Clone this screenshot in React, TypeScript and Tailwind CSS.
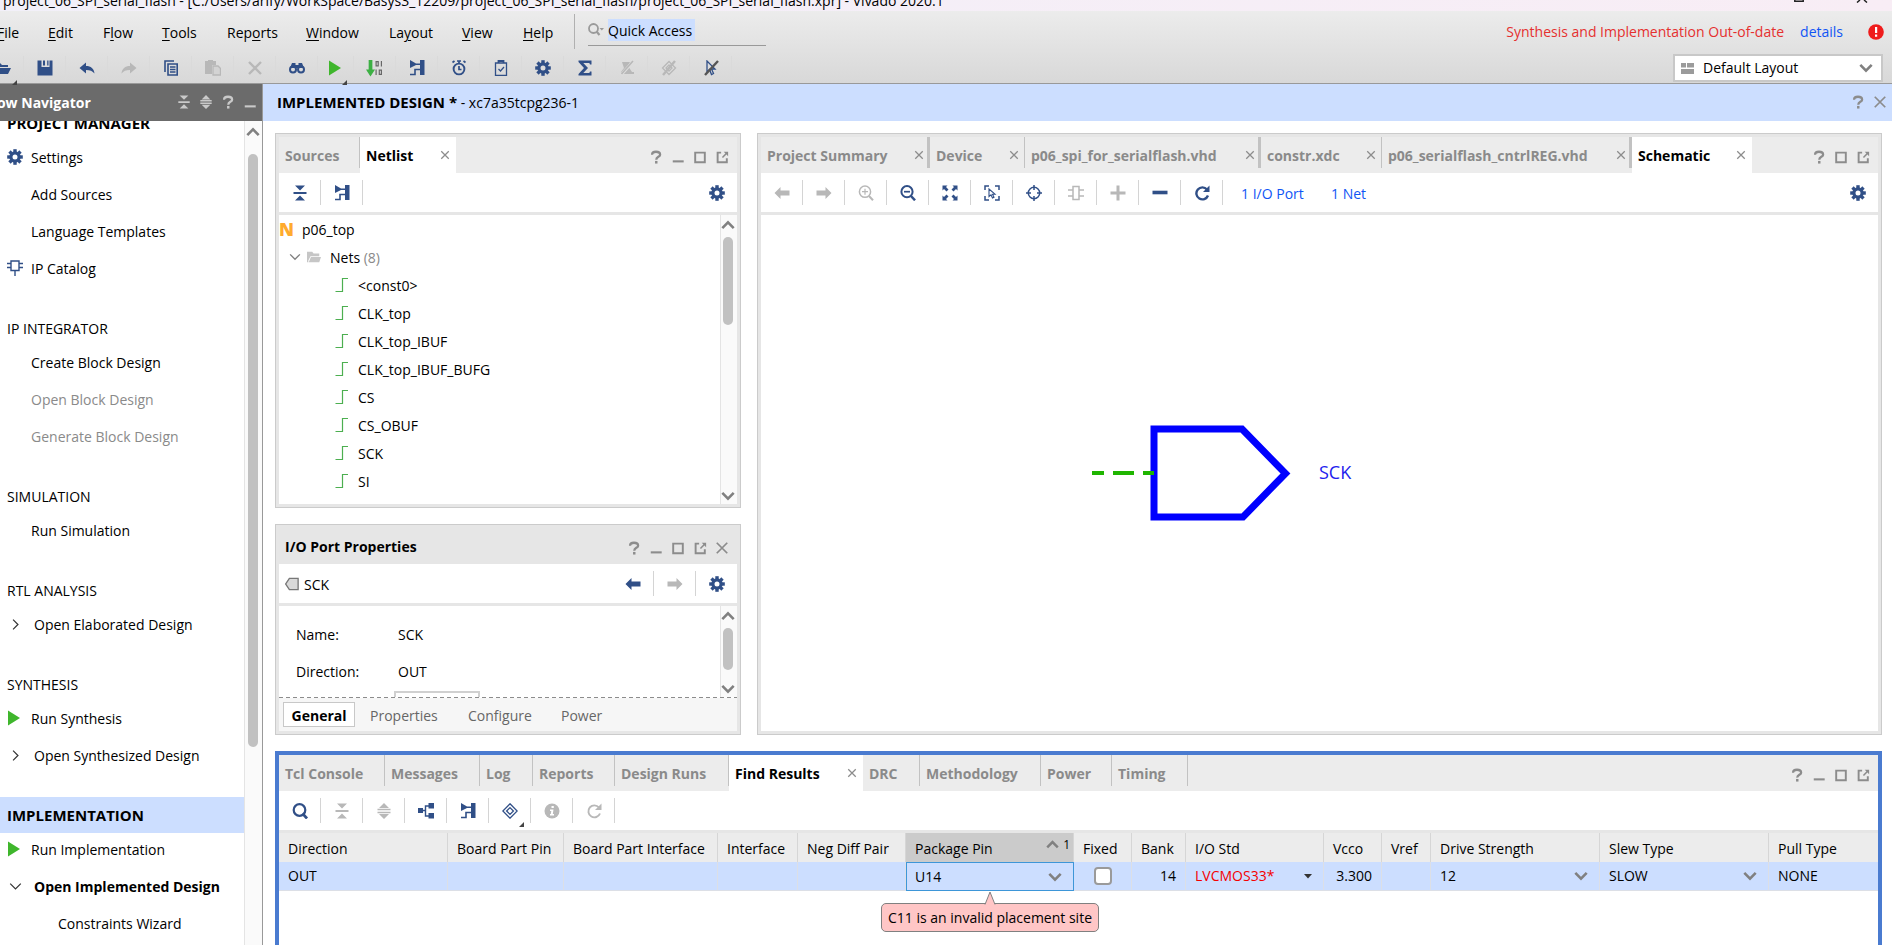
import React from "react";

const NAVY = "#304f87";
const GREY = "#b8b8b8";
const MID = "#8c8c8c";

type IconProps = { c?: string; s?: number };

function Svg({ s = 16, children }: { s?: number; children: React.ReactNode }) {
  return (
    <svg width={s} height={s} viewBox="0 0 16 16" fill="none" aria-hidden="true" className="shrink-0">
      {children}
    </svg>
  );
}

const Gear = ({ c = NAVY, s }: IconProps) => (
  <Svg s={s}>
    <circle cx="8" cy="8" r="4.1" stroke={c} strokeWidth="3.2" />
    {[0, 45, 90, 135].map((a) => (
      <g key={a} transform={`rotate(${a} 8 8)`} fill={c}>
        <rect x="6.3" y="0.2" width="3.4" height="3" />
        <rect x="6.3" y="12.8" width="3.4" height="3" />
      </g>
    ))}
  </Svg>
);
const Open = () => (
  <Svg>
    <path d="M0 3h5l2 2h6v2H4L1 13H0z M5 8h11l-3 6H2z" fill={NAVY} />
  </Svg>
);
const Save = () => (
  <Svg>
    <path d="M0.500 0.500h4V7h8V0.500h3v15H.5z" fill={NAVY} />
    <path d="M6 0.500h2V5.500H6z M10.200 0.500h1.300v5h-1.300z" fill={NAVY} />
  </Svg>
);
const Undo = () => (
  <Svg>
    <path d="M0.500 8 7 2.500V6c5 0 8 2.500 8.500 7.500C13.500 11 11 10 7 10v3.500z" fill={NAVY} />
  </Svg>
);
const Redo = () => (
  <Svg>
    <path d="M15.500 8 9 2.500V6C4 6 1 8.500 .5 13.500 2.500 11 5 10 9 10v3.500z" fill={GREY} />
  </Svg>
);
const Copy = () => (
  <Svg>
    <path d="M2 12V1h9" stroke={NAVY} strokeWidth="1.6" />
    <path d="M5 4h9.200v11H5z" stroke={NAVY} strokeWidth="1.600" />
    <path d="M7 7h5.500M7 9.500h5.500M7 12h5.500" stroke={NAVY} strokeWidth="1.500" />
  </Svg>
);
const Paste = () => (
  <Svg>
    <path d="M0 1h3V0h5v1h3v4H7v9H0z" fill={GREY} />
    <path d="M8 6h5l2.500 2.500V15H8z" fill="#d3d3d3" stroke={GREY} strokeWidth="1.300" />
  </Svg>
);
const Cross = ({ c = MID, s, w = 1.8 }: IconProps & { w?: number }) => (
  <Svg s={s}>
    <path d="M2 2l12 12M14 2 2 14" stroke={c} strokeWidth={w} />
  </Svg>
);
const Binoculars = () => (
  <Svg>
    <path d="M3 3h3.500v2h3V3H13l2 5H1z" fill={NAVY} />
    <circle cx="4" cy="9.500" r="3" stroke={NAVY} strokeWidth="2" />
    <circle cx="12" cy="9.500" r="3" stroke={NAVY} strokeWidth="2" />
  </Svg>
);
const Play = () => (
  <Svg>
    <path d="M1 0.500v15L13 8z" fill="#3fb62c" />
  </Svg>
);
const Bits = () => (
  <Svg s={17}>
    <path d="M2.500 0h3.500v9H8.500L4.200 15.500 0 9h2.500z" fill="#3cb043" />
    <g stroke="#666" strokeWidth="1.100">
      <path d="M9.500 1.500h2v4h-2zM14.500 1v5M9.500 9v5M12.500 9.500h2v4h-2z" />
    </g>
  </Svg>
);
const Netgate = () => (
  <Svg>
    <path d="M1 0v8l6-3h4V15H15.500V0H11v3.500H7z" fill={NAVY} />
    <path d="M1 14.500h5V9.500h5" stroke={NAVY} strokeWidth="1.600" />
  </Svg>
);
const Clock = () => (
  <Svg>
    <circle cx="8" cy="9" r="5.400" stroke={NAVY} strokeWidth="1.900" />
    <path d="M8 6v3.500h2.500M6 1h4M1.500 2.500 3.500 1M14.500 2.500 12.500 1M8 1v3" stroke={NAVY} strokeWidth="1.700" />
  </Svg>
);
const Clipboard = () => (
  <Svg>
    <path d="M2.500 3h11v12.300h-11z" stroke={NAVY} strokeWidth="1.300" />
    <path d="M5.500 3V1h5v2" stroke={NAVY} strokeWidth="1.800" />
    <path d="M5.500 9l2 2 3.500-4" stroke={NAVY} strokeWidth="1.200" />
  </Svg>
);
const Sigma = () => (
  <Svg>
    <path d="M1.500 .5h13v4H13l-.7-1.500H6.300l4.700 5-4.700 5h6L13 11.500h1.500v4h-13V14L7 8 1.500 2z" fill={NAVY} />
  </Svg>
);
const SlashA = () => (
  <Svg>
    <path d="M3 2h8l-2 4 4 6h2v2H2v-2l3-4z" fill={GREY} />
    <path d="M14.500 1 2 15" stroke="#dedede" strokeWidth="3" />
    <path d="M14 1 2.500 14" stroke={GREY} strokeWidth="1.600" />
  </Svg>
);
const SlashB = () => (
  <Svg>
    <path d="M8 1.500 14.500 8 8 14.500 1.500 8z M8 5l3 3-3 3-3-3z" stroke={GREY} strokeWidth="1.300" />
    <path d="M14 1 2 15" stroke={GREY} strokeWidth="2.400" />
  </Svg>
);
const SlashC = () => (
  <Svg>
    <path d="M4 1v11l2.500-2.500 2 5 2-1-2-4.500H12z" stroke={NAVY} strokeWidth="1.300" />
    <path d="M15 1 2 15" stroke="#555" strokeWidth="2.400" />
  </Svg>
);
const Collapse = ({ c = NAVY, s }: IconProps) => (
  <Svg s={s}>
    <path d="M3 0.500h10L8 5.500z M3 15.500h10L8 10.500z M1.500 7h13v2h-13z" fill={c} />
  </Svg>
);
const Expand = ({ c = GREY, s }: IconProps) => (
  <Svg s={s}>
    <path d="M3 5h10L8 0z M3 11h10l-5 5z M1.500 5.800h13v1.500h-13z M1.500 8.700h13v1.500h-13z" fill={c} />
  </Svg>
);
const Arrow = ({ c = NAVY, flip = false }: IconProps & { flip?: boolean }) => (
  <Svg>
    <path d={flip ? "M15.500 8 9.500 2v3.500H.5v5h9V14z" : "M.5 8l6-6v3.500h9v5h-9V14z"} fill={c} />
  </Svg>
);
const ZoomIcon = ({ c = NAVY, plus = false, w = 2 }: IconProps & { plus?: boolean; w?: number }) => (
  <Svg>
    <circle cx="7" cy="6.700" r="5.600" stroke={c} strokeWidth={w} />
    <path d="M11 11l4 4.300" stroke={c} strokeWidth={w + 0.5} />
    <path d={plus ? "M4 6.700h6M7 3.700v6" : "M4 6.700h6"} stroke={c} strokeWidth={w - 0.3} />
  </Svg>
);
const Fit = () => (
  <Svg>
    <path d="M0.500 .5h5L4 2l2.500 2.500-2 2L2 4 .5 5.500z M15.500 .5h-5L12 2 9.500 4.500l2 2L14 4l1.500 1.500z M.5 15.500h5L4 14l2.500-2.500-2-2L2 12 .5 10.500z M15.500 15.500h-5L12 14l-2.500-2.500 2-2L14 12l1.500-1.500z" fill={NAVY} />
  </Svg>
);
const FitSel = () => (
  <Svg>
    <path d="M1 5V1h4M11 1h4v4M15 11v4h-4M5 15H1v-4" stroke={NAVY} strokeWidth="1.500" />
    <path d="M5 4v7.500l2-1.700 1.500 3.200 1.500-.8-1.500-3H11z" stroke={NAVY} strokeWidth="1.100" />
  </Svg>
);
const Target = () => (
  <Svg>
    <circle cx="8" cy="8" r="5.700" stroke={NAVY} strokeWidth="1.500" />
    <path d="M8 0v5M8 11v5M0 8h5M11 8h5" stroke={NAVY} strokeWidth="1.500" />
  </Svg>
);
const Chip = () => (
  <Svg>
    <path d="M5 1.500h6v13H5z M0 5h5M0 11h5M11 5h5M11 11h5" stroke={GREY} strokeWidth="1.500" />
  </Svg>
);
const Plus = () => (
  <Svg>
    <path d="M8 .5v15M.5 8h15" stroke={GREY} strokeWidth="3" />
  </Svg>
);
const Minus = () => (
  <Svg>
    <path d="M0.500 7.500h15" stroke={NAVY} strokeWidth="3.600" />
  </Svg>
);
const Reload = ({ c = NAVY, w = 2.4 }: IconProps & { w?: number }) => (
  <Svg>
    <path d="M13 4.500A6 6 0 1 0 14 10.500" stroke={c} strokeWidth={w} />
    <path d="M15.500 0.500v6.500H9z" fill={c} />
  </Svg>
);
const IpCore = () => (
  <Svg>
    <path d="M4 1h8v9.500H4z M0 3.500h4M0 7.500h4M12 3.500h4M12 7.500h4M8 10.500v5.500" stroke={NAVY} strokeWidth="1.400" />
  </Svg>
);
const Chevron = ({ c = "#808080", d = "down", s = 14, w = 3 }: IconProps & { d?: "down" | "up" | "right"; w?: number }) => (
  <Svg s={s}>
    <path
      d={d === "down" ? "M1.500 4.500 8 11l6.500-6.500" : d === "up" ? "M1.500 11.500 8 5l6.500 6.500" : "M5 2l6 6-6 6"}
      stroke={c}
      strokeWidth={w}
    />
  </Svg>
);
const NetStep = () => (
  <svg width="14" height="14" viewBox="0 0 14 14" fill="none" aria-hidden="true" className="shrink-0">
    <path d="M0.500 13.500h7V0.500H13" stroke="#4caf50" strokeWidth="1.200" />
  </svg>
);
const Folder = () => (
  <Svg s={14}>
    <path d="M0 2h6l1.500 2H14v3H4l-2.500 5V14H0z M4.500 8H16l-2 6H2z" fill="#c6c6c6" />
  </Svg>
);
const PortTag = () => (
  <Svg s={14}>
    <path d="M5 1.500h10v13H5L.8 8z" fill="#d9d9d9" stroke="#777" strokeWidth="1.500" />
  </Svg>
);
const Search = ({ c = NAVY, w = 2.2 }: IconProps & { w?: number }) => (
  <Svg>
    <circle cx="7.500" cy="7" r="5.800" stroke={c} strokeWidth={w} />
    <path d="M10.500 10.500l4.500 5" stroke={c} strokeWidth={w + 0.5} />
  </Svg>
);
const SearchMenu = () => (
  <svg width="16" height="13" viewBox="0 0 16 13" fill="none" aria-hidden="true" className="shrink-0">
    <circle cx="5.500" cy="5.500" r="4.500" stroke="#9a9a9a" strokeWidth="1.800" />
    <path d="M8.500 8.500l3 3.500" stroke="#9a9a9a" strokeWidth="2.200" />
    <path d="M11.500 5H16l-2.200 2.500z" fill="#9a9a9a" />
  </svg>
);
const Hier = () => (
  <Svg>
    <path d="M0 5h5v5H0z M10.500 0H16v5.500h-5.500z M10.500 10H16v5.500h-5.500z" fill={NAVY} />
    <path d="M11 3H7.500v10H11M4 7.500h3.500" stroke={NAVY} strokeWidth="1.400" />
  </Svg>
);
const Diamond = () => (
  <Svg>
    <path d="M8 .8 15.200 8 8 15.200.8 8z M8 4.600 11.400 8 8 11.400 4.600 8z" stroke={NAVY} strokeWidth="1.300" />
  </Svg>
);
const Info = () => (
  <Svg>
    <circle cx="8" cy="8" r="7.500" fill={GREY} />
    <path d="M7.500 3h2.300v2H7.500z M6 6.500h3.500L8.800 11h1.200v1.500H6V11h.8L7.300 8H6z" fill="#fff" />
  </Svg>
);
const Help = ({ c = MID }: IconProps) => (
  <Svg s={14}>
    <path d="M3.500 5.500C3.500 2.800 5.500 2 8 2s4.700 1 4.700 3.300C12.700 8 8.300 7.700 8.300 11" stroke={c} strokeWidth="2.600" />
    <path d="M6.900 12.500h2.800V15.500H6.900z" fill={c} />
  </Svg>
);
const Min = ({ c = MID }: IconProps) => (
  <Svg s={14}>
    <path d="M2 13h12.500" stroke={c} strokeWidth="2.400" />
  </Svg>
);
const Max = () => (
  <Svg s={14}>
    <path d="M2.500 3h11v11h-11z" stroke={MID} strokeWidth="2.200" />
  </Svg>
);
const Pop = () => (
  <Svg s={14}>
    <path d="M7 3H3v11h10.500v-4.500" stroke={MID} strokeWidth="2.200" />
    <path d="M10 2h5v5z" fill={MID} />
    <path d="M13.500 3.500 8.500 8.500" stroke={MID} strokeWidth="1.800" />
  </Svg>
);

function ToolButton({ label, children, faint = false, menu = false, narrow = false }: { label: string; children: React.ReactNode; faint?: boolean; menu?: boolean; narrow?: boolean }) {
  return (
    <button
      type="button"
      aria-label={label}
      className={`relative flex h-[25px] shrink-0 items-center justify-center border-r ${narrow ? "w-9" : "w-[42px]"} ${faint ? "border-[#dadada]" : "border-[#d4d4d4]"}`}
    >
      {children}
      {menu && <span className="absolute -bottom-1 right-1.5 border-b-[5px] border-l-[5px] border-b-[#444] border-l-transparent" />}
    </button>
  );
}

function WinButtons({ kinds }: { kinds: string[] }) {
  return (
    <div className="ml-auto flex items-center gap-2 pr-2 pt-1">
      {kinds.map((k) => (
        <button key={k} type="button" aria-label={k} className="block">
          {k === "Help" && <Help />}
          {k === "Minimize" && <Min />}
          {k === "Maximize" && <Max />}
          {k === "Float" && <Pop />}
          {k === "Close" && <Cross s={14} w={2} />}
        </button>
      ))}
    </div>
  );
}

type TabDef = { label: string; w: string; active?: boolean; close?: boolean; thick?: boolean };

function Tabs({ tabs, kinds }: { tabs: TabDef[]; kinds: string[] }) {
  return (
    <div className="flex h-9 shrink-0 bg-[#ececec]">
      {tabs.map((t) => (
        <div key={t.label} className={`relative flex shrink-0 items-center pl-1.5 ${t.w} ${t.active ? "bg-white" : ""}`}>
          <button type="button" className={`whitespace-nowrap pt-0.5 font-bold ${t.active ? "text-black" : "text-[#8a8a8a]"}`}>
            {t.label}
          </button>
          {t.close && (
            <button type="button" aria-label={`Close ${t.label}`} className="ml-auto mr-1.5 block">
              <Cross s={10} w={2} />
            </button>
          )}
          {!t.active && (
            <span className={`absolute right-0 top-0 h-[31px] bg-[#c2c2c2] ${t.thick ? "w-[3px]" : "w-px"}`} />
          )}
        </div>
      ))}
      <WinButtons kinds={kinds} />
    </div>
  );
}

function Scrollbar({ thumb }: { thumb: string }) {
  return (
    <div className="flex w-[17px] shrink-0 flex-col items-center border-l border-[#e4e4e4] bg-[#fafafa] pb-px pr-0.5 pt-[3px]" aria-hidden="true">
      <Chevron d="up" />
      <div className={`mt-[5px] w-2.5 shrink-0 rounded-full bg-[#c1c1c1] ${thumb}`} />
      <div className="mt-auto">
        <Chevron />
      </div>
    </div>
  );
}

const panel = "flex min-h-0 flex-col border border-[#cbcbcb] bg-[#e6e6e6] p-[3px]";
const bar = "flex h-[39px] shrink-0 items-center bg-white";

type NavItem = { label: string; icon?: "gear" | "ip" | "play" | "right" | "down"; dim?: boolean; bold?: boolean; deep?: boolean };
const nav: { title: string; bold?: boolean; active?: boolean; items: NavItem[] }[] = [
  { title: "PROJECT MANAGER", bold: true, items: [{ label: "Settings", icon: "gear" }, { label: "Add Sources" }, { label: "Language Templates" }, { label: "IP Catalog", icon: "ip" }] },
  { title: "IP INTEGRATOR", items: [{ label: "Create Block Design" }, { label: "Open Block Design", dim: true }, { label: "Generate Block Design", dim: true }] },
  { title: "SIMULATION", items: [{ label: "Run Simulation" }] },
  { title: "RTL ANALYSIS", items: [{ label: "Open Elaborated Design", icon: "right" }] },
  { title: "SYNTHESIS", items: [{ label: "Run Synthesis", icon: "play" }, { label: "Open Synthesized Design", icon: "right" }] },
  { title: "IMPLEMENTATION", bold: true, active: true, items: [{ label: "Run Implementation", icon: "play" }, { label: "Open Implemented Design", icon: "down", bold: true }, { label: "Constraints Wizard", deep: true }] },
];

function Navigator() {
  return (
    <aside className="flex w-[263px] shrink-0 flex-col border-r border-[#999] bg-white">
      <header className="flex h-[37px] shrink-0 items-center bg-[#6b6b6b] pb-0.5 pr-[5px]">
        <h2 className="-ml-[15px] whitespace-nowrap pt-0.5 font-bold text-white">Flow Navigator</h2>
        <div className="ml-auto flex items-center gap-2">
          <button type="button" aria-label="Collapse all"><Collapse c="#c9c9c9" s={14} /></button>
          <button type="button" aria-label="Expand all"><Expand c="#c9c9c9" s={14} /></button>
          <button type="button" aria-label="Help"><Help c="#c9c9c9" /></button>
          <button type="button" aria-label="Minimize"><Min c="#c9c9c9" /></button>
        </div>
      </header>
      <div className="flex min-h-0 flex-1 overflow-hidden">
        <nav className="-mt-4 min-w-0 flex-1">
          {nav.map((s) => (
            <section key={s.title}>
              <h3 className={`flex h-9 items-center pl-[7px] ${s.bold ? "text-[15px] font-bold" : "pt-0.5"} ${s.active ? "bg-[#ccdeff]" : ""}`}>{s.title}</h3>
              <ul className="flex flex-col gap-[3px] pb-6">
                {s.items.map((i) => {
                  const branch = i.icon === "right" || i.icon === "down";
                  return (
                    <li key={i.label} className="flex h-[34px] items-center pb-0.5 pl-[7px]">
                      <span className={`flex shrink-0 items-center ${i.deep ? "w-[51px]" : branch ? "w-[27px] pl-0.5" : "w-6"}`}>
                        {i.icon === "gear" && <Gear />}
                        {i.icon === "ip" && <IpCore />}
                        {i.icon === "play" && <Play />}
                        {branch && <Chevron d={i.icon === "right" ? "right" : "down"} c="#333" s={13} w={1.5} />}
                      </span>
                      <a href="#" className={`whitespace-nowrap pt-0.5 ${i.dim ? "text-[#8a8a8a]" : ""} ${i.bold ? "font-bold" : ""}`}>{i.label}</a>
                    </li>
                  );
                })}
              </ul>
            </section>
          ))}
        </nav>
        <div className="flex w-[18px] shrink-0 flex-col items-center border-l border-[#e4e4e4] bg-[#fafafa] pr-px pt-1" aria-hidden="true">
          <Chevron d="up" />
          <div className="mt-[15px] h-[593px] w-2.5 shrink-0 rounded-full bg-[#c1c1c1]" />
        </div>
      </div>
    </aside>
  );
}

const menus: { w: string; t: [string, string, string] }[] = [
  { w: "w-[51px]", t: ["", "F", "ile"] },
  { w: "w-[55px]", t: ["", "E", "dit"] },
  { w: "w-[59px]", t: ["F", "l", "ow"] },
  { w: "w-[65px]", t: ["", "T", "ools"] },
  { w: "w-[79px]", t: ["Rep", "o", "rts"] },
  { w: "w-[83px]", t: ["", "W", "indow"] },
  { w: "w-[73px]", t: ["La", "y", "out"] },
  { w: "w-[61px]", t: ["", "V", "iew"] },
  { w: "w-[51px]", t: ["", "H", "elp"] },
];

function TopBars() {
  return (
    <div className="shrink-0">
      <div className="flex h-[11px] items-end justify-between overflow-hidden bg-linear-to-r from-[#f2f0f9] to-[#f8edf5]">
        <p className="whitespace-nowrap pl-[3px] leading-5">
          project_06_SPI_serial_flash - [C:/Users/arify/WorkSpace/Basys3_12209/project_06_SPI_serial_flash/project_06_SPI_serial_flash.xpr] - Vivado 2020.1
        </p>
        <div className="flex h-[11px] items-start gap-[52px] pr-6">
          <svg width="10" height="3" viewBox="0 0 10 3" aria-hidden="true"><path d="M.8 0v1.200h8.400V0" fill="none" stroke="#222" strokeWidth="1.500" /></svg>
          <svg width="12" height="3" viewBox="0 0 12 3" aria-hidden="true"><path d="M4 0 1 2.500M8 0l3 2.500" fill="none" stroke="#222" strokeWidth="1.500" /></svg>
        </div>
      </div>
      <div className="h-[73px] border-b border-[#999] bg-linear-to-b from-[#ececec] to-[#d8d8d8]">
        <div className="flex h-[42px] items-start">
          <div className="-ml-[3px] flex h-11 items-center">
            {menus.map((m) => (
              <button key={m.t.join("")} type="button" className={`whitespace-nowrap text-left ${m.w}`}>
                {m.t[0]}<u className="underline-offset-2">{m.t[1]}</u>{m.t[2]}
              </button>
            ))}
          </div>
          <div className="mt-[3px] flex h-[35px] border-l border-[#b0b0b0] pl-[13px]">
            <label className="flex h-8 w-[178px] items-center gap-1 border-b border-[#999]">
              <SearchMenu />
              <input aria-label="Quick Access" defaultValue="Quick Access" className="h-[22px] w-[87px] bg-[#ccdeff] pt-0.5 outline-none" />
            </label>
          </div>
          <div className="ml-auto flex h-[42px] items-center whitespace-nowrap pr-2">
            <span className="text-[#e5302f]">Synthesis and Implementation Out-of-date</span>
            <a href="#" className="ml-4 text-[#0f55f5]">details</a>
            <svg width="16" height="16" viewBox="0 0 16 16" className="ml-[25px]" aria-hidden="true">
              <circle cx="8" cy="8" r="7.800" fill="#ef1c1c" />
              <path d="M7 3h2.200v6H7z M7 10.500h2.200v2.200H7z" fill="#fff" />
            </svg>
          </div>
        </div>
        <div className="flex h-[30px] items-center">
          <div className="-ml-[18px] flex">
            <ToolButton label="Open" faint menu><Open /></ToolButton>
            <ToolButton label="Save" faint><Save /></ToolButton>
            <ToolButton label="Undo" faint><Undo /></ToolButton>
            <ToolButton label="Redo" faint><Redo /></ToolButton>
            <ToolButton label="Copy" faint><Copy /></ToolButton>
            <ToolButton label="Paste" faint><Paste /></ToolButton>
            <ToolButton label="Delete" faint><Cross c={GREY} w={2.4} /></ToolButton>
            <ToolButton label="Find" faint><Binoculars /></ToolButton>
            <ToolButton label="Run" faint menu narrow><Play /></ToolButton>
            <ToolButton label="Generate bitstream" faint><Bits /></ToolButton>
            <ToolButton label="Schematic" faint><Netgate /></ToolButton>
            <ToolButton label="Timing" faint><Clock /></ToolButton>
            <ToolButton label="Report" faint><Clipboard /></ToolButton>
            <ToolButton label="Settings" faint><Gear /></ToolButton>
            <ToolButton label="Summary" faint><Sigma /></ToolButton>
            <ToolButton label="Unhighlight" faint><SlashA /></ToolButton>
            <ToolButton label="Unmark" faint><SlashB /></ToolButton>
            <ToolButton label="Unselect" faint><SlashC /></ToolButton>
          </div>
          <div className="relative ml-auto mr-[9px] flex h-7 w-[210px] items-center border-2 border-[#c8c8c8] bg-white">
            <svg width="13" height="11" viewBox="0 0 13 11" className="pointer-events-none absolute left-1.5" aria-hidden="true">
              <path d="M0 0h5v4.500H0z M6 0h7v4.500H6z M0 6h13v5H0z" fill="#9b9b9b" />
            </svg>
            <select aria-label="Layout" className="w-full appearance-none bg-transparent pl-7 outline-none">
              <option>Default Layout</option>
            </select>
            <span className="pointer-events-none absolute right-2"><Chevron /></span>
          </div>
        </div>
      </div>
    </div>
  );
}

function Netlist() {
  const nets = ["<const0>", "CLK_top", "CLK_top_IBUF", "CLK_top_IBUF_BUFG", "CS", "CS_OBUF", "SCK", "SI"];
  return (
    <section className={`${panel} flex-1`}>
      <Tabs
        kinds={["Help", "Minimize", "Maximize", "Float"]}
        tabs={[{ label: "Sources", w: "w-[81px]" }, { label: "Netlist", w: "w-[96px]", active: true, close: true }]}
      />
      <div className={bar}>
        <ToolButton label="Collapse all"><Collapse /></ToolButton>
        <ToolButton label="Schematic"><Netgate /></ToolButton>
        <button type="button" aria-label="Settings" className="ml-auto mr-3"><Gear /></button>
      </div>
      <div className="mt-[3px] flex min-h-0 flex-1 bg-white">
        <ul className="min-w-0 flex-1 overflow-hidden">
          <li className="flex h-7 items-center">
            <span className="w-[23px] text-lg leading-7 font-extrabold text-[#ffab2e]">N</span>
            <span className="pt-0.5">p06_top</span>
          </li>
          <li className="flex h-7 items-center pl-2.5">
            <Chevron c="#808080" s={12} w={1.8} />
            <span className="ml-1.5 w-[23px]"><Folder /></span>
            <span className="pt-0.5">Nets <span className="text-[#8a8a8a]">(8)</span></span>
          </li>
          {nets.map((n) => (
            <li key={n} className="flex h-7 items-center pl-14">
              <NetStep />
              <span className="ml-[9px] pt-0.5">{n}</span>
            </li>
          ))}
        </ul>
        <Scrollbar thumb="h-[88px]" />
      </div>
    </section>
  );
}

function PortProperties() {
  return (
    <section className={`${panel} h-[211px] shrink-0`}>
      <div className="flex h-9 shrink-0 items-center pl-1.5">
        <h2 className="pt-0.5 font-bold">I/O Port Properties</h2>
        <WinButtons kinds={["Help", "Minimize", "Maximize", "Float", "Close"]} />
      </div>
      <div className={`${bar} pl-1.5`}>
        <PortTag />
        <span className="ml-[5px] pt-0.5">SCK</span>
        <div className="ml-auto flex">
          <ToolButton label="Back"><Arrow /></ToolButton>
          <ToolButton label="Forward"><Arrow c={GREY} flip /></ToolButton>
          <button type="button" aria-label="Settings" className="flex w-[41px] items-center justify-center"><Gear /></button>
        </div>
      </div>
      <div className="mt-[3px] flex min-h-0 flex-1 bg-white">
        <dl className="grid min-w-0 flex-1 auto-rows-[37px] grid-cols-[102px_1fr] items-center overflow-hidden pl-[17px] pt-2.5">
          <dt>Name:</dt>
          <dd>SCK</dd>
          <dt>Direction:</dt>
          <dd>OUT</dd>
          <dt />
          <dd className="-ml-1 h-9 w-[86px] border-2 border-[#d0d0d0]" />
        </dl>
        <Scrollbar thumb="h-[42px]" />
      </div>
      <div className="h-px shrink-0 bg-[repeating-linear-gradient(90deg,#8c8c8c_0_4px,#ffffff_4px_7px)]" />
      <div className="flex h-[33px] shrink-0 items-center bg-[#f6f6f6] pl-1 text-[#666]">
        <button type="button" className="h-[25px] w-[72px] border border-[#c8c8c8] bg-white pt-0.5 font-bold leading-5 text-black">General</button>
        <button type="button" className="ml-[15px] w-[82px] pt-0.5 text-left">Properties</button>
        <button type="button" className="ml-4 w-[77px] pt-0.5 text-left">Configure</button>
        <button type="button" className="ml-4 pt-0.5 text-left">Power</button>
      </div>
    </section>
  );
}

function Schematic() {
  return (
    <section className={`${panel} min-w-0 flex-1`}>
      <Tabs
        kinds={["Help", "Maximize", "Float"]}
        tabs={[
          { label: "Project Summary", w: "w-[169px]", close: true, thick: true },
          { label: "Device", w: "w-[95px]", close: true },
          { label: "p06_spi_for_serialflash.vhd", w: "w-[236px]", close: true, thick: true },
          { label: "constr.xdc", w: "w-[121px]", close: true },
          { label: "p06_serialflash_cntrlREG.vhd", w: "w-[250px]", close: true, thick: true },
          { label: "Schematic", w: "w-[120px]", active: true, close: true },
        ]}
      />
      <div className={bar}>
        <ToolButton label="Back"><Arrow c={GREY} /></ToolButton>
        <ToolButton label="Forward"><Arrow c={GREY} flip /></ToolButton>
        <ToolButton label="Zoom in"><ZoomIcon c={GREY} plus w={1.5} /></ToolButton>
        <ToolButton label="Zoom out"><ZoomIcon /></ToolButton>
        <ToolButton label="Zoom fit"><Fit /></ToolButton>
        <ToolButton label="Zoom to selection"><FitSel /></ToolButton>
        <ToolButton label="Autofit"><Target /></ToolButton>
        <ToolButton label="Cells"><Chip /></ToolButton>
        <ToolButton label="Add"><Plus /></ToolButton>
        <ToolButton label="Remove"><Minus /></ToolButton>
        <ToolButton label="Reload"><Reload /></ToolButton>
        <a href="#" className="ml-[18px] w-16 whitespace-nowrap pt-0.5 text-[#0f55f5]">1 I/O Port</a>
        <a href="#" className="ml-[26px] whitespace-nowrap pt-0.5 text-[#0f55f5]">1 Net</a>
        <button type="button" aria-label="Settings" className="ml-auto mr-3"><Gear /></button>
      </div>
      <div className="relative mt-[3px] min-h-0 flex-1 overflow-hidden bg-white">
        <svg width="270" height="100" viewBox="0 0 270 100" className="absolute left-[331px] top-[209px]" role="img" aria-label="SCK port">
          <path d="M62 5h88l43.500 44.500L151 93H62z" fill="none" stroke="#0000ff" strokeWidth="7" />
          <path d="M0 49h12M21 49h21M51 49h11" stroke="#1fb500" strokeWidth="4" />
          <text x="227" y="55" fill="#2222ee" fontSize="18">SCK</text>
        </svg>
      </div>
    </section>
  );
}

function CellSelect({ label, value, small = false, red = false }: { label: string; value: string; small?: boolean; red?: boolean }) {
  return (
    <span className="relative flex items-center">
      <select aria-label={label} className={`w-full appearance-none bg-transparent outline-none ${red ? "text-[#f50000]" : ""}`}>
        <option>{value}</option>
      </select>
      <span className="pointer-events-none absolute right-[11px]">
        {small ? (
          <svg width="8" height="5" viewBox="0 0 8 5" aria-hidden="true"><path d="M0 0h8L4 4.500z" fill="#333" /></svg>
        ) : (
          <Chevron />
        )}
      </span>
    </span>
  );
}

const headCell = "border-r border-[#d6d6d6] px-[9px] pb-0 pt-0.5 text-left font-normal";
const bodyCell = "border-r border-b border-[#dcdfe6] px-[9px]";

function FindResults() {
  return (
    <section className="flex h-[194px] shrink-0 flex-col border-4 border-b-0 border-[#4a7bd0] bg-white">
      <Tabs
        kinds={["Help", "Minimize", "Maximize", "Float"]}
        tabs={[
          { label: "Tcl Console", w: "w-[106px]" },
          { label: "Messages", w: "w-[95px]" },
          { label: "Log", w: "w-[53px]" },
          { label: "Reports", w: "w-[82px]" },
          { label: "Design Runs", w: "w-[114px]" },
          { label: "Find Results", w: "w-[134px]", active: true, close: true },
          { label: "DRC", w: "w-[57px]" },
          { label: "Methodology", w: "w-[121px]" },
          { label: "Power", w: "w-[71px]" },
          { label: "Timing", w: "w-[76px]" },
        ]}
      />
      <div className={bar}>
        <ToolButton label="Search"><Search /></ToolButton>
        <ToolButton label="Collapse all"><Collapse c={GREY} /></ToolButton>
        <ToolButton label="Expand all"><Expand /></ToolButton>
        <ToolButton label="Hierarchy"><Hier /></ToolButton>
        <ToolButton label="Schematic"><Netgate /></ToolButton>
        <ToolButton label="Mark" menu><Diamond /></ToolButton>
        <ToolButton label="Info"><Info /></ToolButton>
        <ToolButton label="Reload"><Reload c={GREY} w={1.9} /></ToolButton>
      </div>
      <table className="w-full table-fixed border-separate border-spacing-0 whitespace-nowrap border-t-[3px] border-[#e6e6e6]">
        <colgroup>
          <col className="w-[169px]" />
          <col className="w-[116px]" />
          <col className="w-[154px]" />
          <col className="w-[80px]" />
          <col className="w-[108px]" />
          <col className="w-[168px]" />
          <col className="w-[58px]" />
          <col className="w-[54px]" />
          <col className="w-[138px]" />
          <col className="w-[58px]" />
          <col className="w-[49px]" />
          <col className="w-[169px]" />
          <col className="w-[169px]" />
          <col />
        </colgroup>
        <thead>
          <tr className="h-[29px] bg-[#ececec]">
            <th className={headCell}>Direction</th>
            <th className={headCell}>Board Part Pin</th>
            <th className={headCell}>Board Part Interface</th>
            <th className={headCell}>Interface</th>
            <th className={headCell}>Neg Diff Pair</th>
            <th className={`${headCell} bg-[#cbcbcb]`}>
              <span className="flex items-center">
                Package Pin
                <span className="ml-auto -mr-1.5 mb-2 flex h-3 items-center gap-1 text-xs">
                  <Chevron d="up" s={13} />1
                </span>
              </span>
            </th>
            <th className={headCell}>Fixed</th>
            <th className={headCell}>Bank</th>
            <th className={headCell}>I/O Std</th>
            <th className={headCell}>Vcco</th>
            <th className={headCell}>Vref</th>
            <th className={headCell}>Drive Strength</th>
            <th className={headCell}>Slew Type</th>
            <th className="px-[9px] pb-0 pt-0.5 text-left font-normal">Pull Type</th>
          </tr>
        </thead>
        <tbody>
          <tr className="h-[29px] bg-[#ccdeff]">
            <td className={bodyCell}>OUT</td>
            <td className={bodyCell} />
            <td className={bodyCell} />
            <td className={bodyCell} />
            <td className={bodyCell} />
            <td className="relative border border-[#3d96d8] pl-2 pr-0">
              <CellSelect label="Package Pin" value="U14" />
              <div role="tooltip" className="absolute left-1/2 top-10 h-[29px] w-[218px] -translate-x-1/2 rounded-[5px] border border-[#808080] bg-[#ffc6c6] text-center leading-[27px]">
                C11 is an invalid placement site
                <svg width="12" height="14" viewBox="0 0 12 14" className="absolute -top-[13px] left-1/2 -translate-x-1/2" aria-hidden="true">
                  <path d="M1 13.500 6 1l5 12.500" fill="#ffc6c6" stroke="#808080" />
                </svg>
              </div>
            </td>
            <td className={bodyCell}>
              <input type="checkbox" aria-label="Fixed" className="mx-auto block size-[18px] appearance-none rounded border-2 border-[#9a9a9a] bg-white" />
            </td>
            <td className={`${bodyCell} text-right`}>14</td>
            <td className="border-r border-b border-[#dcdfe6] pl-[9px]"><CellSelect label="I/O Std" value="LVCMOS33*" small red /></td>
            <td className={`${bodyCell} text-right`}>3.300</td>
            <td className={bodyCell} />
            <td className="border-r border-b border-[#dcdfe6] pl-[9px]"><CellSelect label="Drive Strength" value="12" /></td>
            <td className="border-r border-b border-[#dcdfe6] pl-[9px]"><CellSelect label="Slew Type" value="SLOW" /></td>
            <td className="border-b border-[#dcdfe6] px-[9px]">NONE</td>
          </tr>
        </tbody>
      </table>
    </section>
  );
}

export default function App() {
  return (
    <div className="flex h-screen flex-col overflow-hidden bg-white font-[Open_Sans,sans-serif] text-sm leading-5 text-black">
      <TopBars />
      <div className="flex min-h-0 flex-1">
        <Navigator />
        <main className="flex min-w-0 flex-1 flex-col">
          <header className="flex h-[37px] shrink-0 items-center bg-[#ccdeff] pb-0.5 pl-3.5 pr-[5px]">
            <h1 className="pt-0.5"><b className="text-[15px]">IMPLEMENTED DESIGN *</b> - xc7a35tcpg236-1</h1>
            <div className="ml-auto flex items-center gap-2">
              <button type="button" aria-label="Help"><Help /></button>
              <button type="button" aria-label="Close"><Cross s={14} w={2} /></button>
            </div>
          </header>
          <div className="flex min-h-0 flex-1 flex-col gap-4 pl-3 pr-2.5 pt-3">
            <div className="flex min-h-0 flex-1 gap-4">
              <div className="flex w-[466px] shrink-0 flex-col gap-4">
                <Netlist />
                <PortProperties />
              </div>
              <Schematic />
            </div>
            <FindResults />
          </div>
        </main>
      </div>
    </div>
  );
}
